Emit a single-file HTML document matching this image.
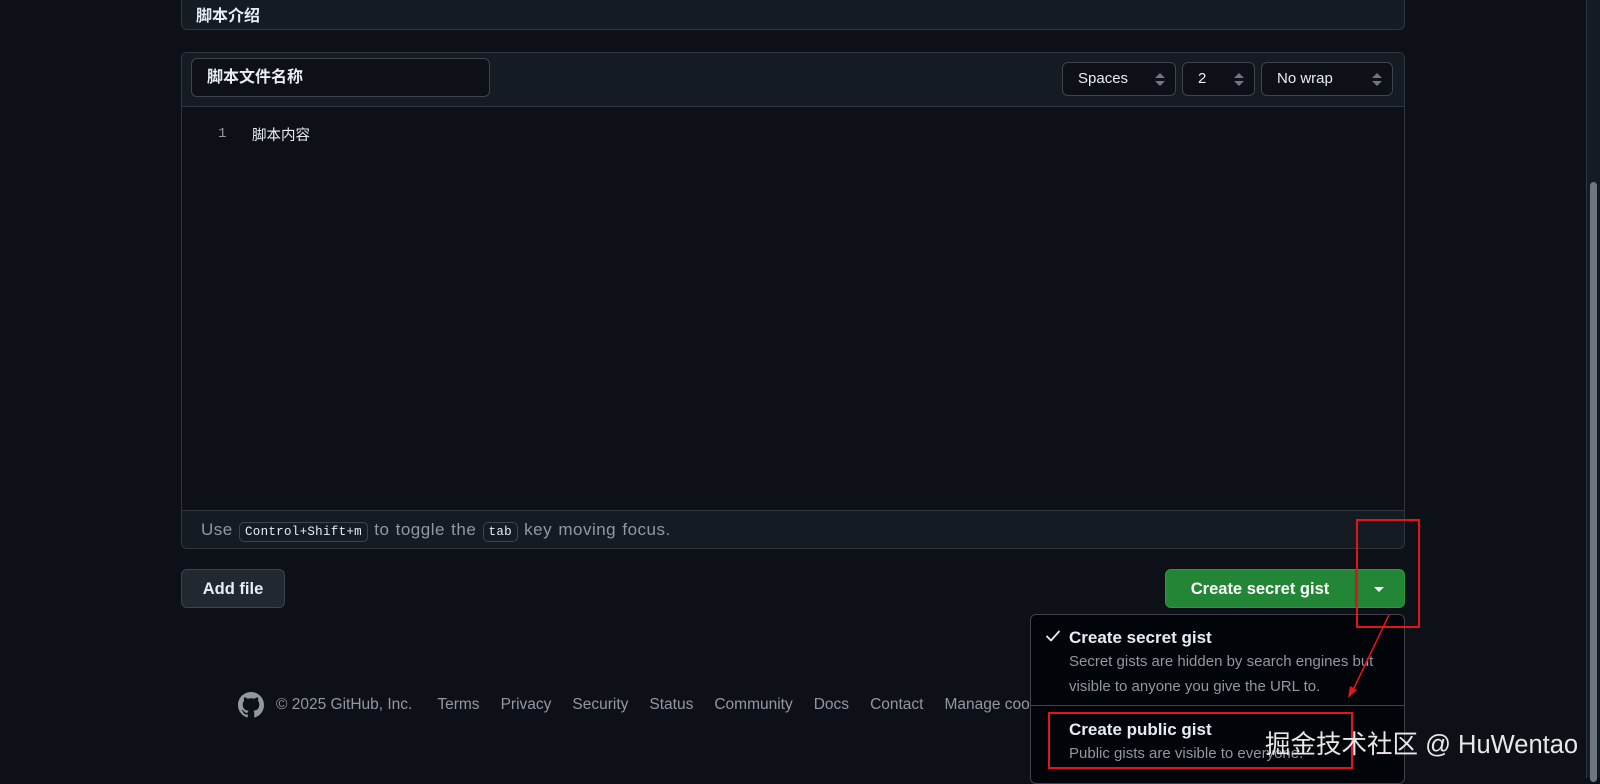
<!DOCTYPE html>
<html><head><meta charset="utf-8"><style>
*{box-sizing:border-box;margin:0;padding:0}
body{width:1600px;height:778px;background:#0d1117;overflow:hidden;position:relative;font-family:"Liberation Sans","Noto Sans CJK SC",sans-serif;color:#e6edf3;font-size:14px}
.abs{position:absolute}
.box{border:1px solid #30363d;border-radius:6px}
.sel{position:absolute;top:62px;height:34px;border:1px solid #3d444d;border-radius:6px;background:#0d1117;font-size:15px;line-height:32px;padding-left:15px}
.sel:after{content:"";position:absolute;right:10px;top:10px;width:0;height:0;border-left:5px solid transparent;border-right:5px solid transparent;border-bottom:5px solid #6e7681}
.sel:before{content:"";position:absolute;right:10px;top:18px;width:0;height:0;border-left:5px solid transparent;border-right:5px solid transparent;border-top:5px solid #6e7681}
kbd{font-family:"Liberation Mono",monospace;font-size:12.5px;border:1px solid #3d444d;border-radius:5px;padding:2px 5px;color:#e6edf3;background:#151b23;letter-spacing:0.3px}
.f a{color:#9198a1;margin-right:21px}
</style></head><body>
<div class="abs box" style="left:181px;top:-10px;width:1224px;height:40px;background:#151b23;border-top:none"></div>
<div class="abs" style="left:196px;top:2px;font-size:16px;font-weight:bold">脚本介绍</div>

<div class="abs box" style="left:181px;top:52px;width:1224px;height:497px"></div>
<div class="abs" style="left:182px;top:53px;width:1222px;height:54px;background:#151b23;border-bottom:1px solid #30363d;border-radius:6px 6px 0 0"></div>
<div class="abs" style="left:191px;top:58px;width:299px;height:39px;border:1px solid #3d444d;border-radius:6px;background:#0d1117;padding-left:15px;line-height:37px;font-size:16px;font-weight:bold">脚本文件名称</div>
<div class="sel" style="left:1062px;width:114px">Spaces</div>
<div class="sel" style="left:1182px;width:73px">2</div>
<div class="sel" style="left:1261px;width:132px">No wrap</div>
<div class="abs" style="left:218px;top:126px;color:#9198a1;font-family:'Liberation Mono',monospace;font-size:14px">1</div>
<div class="abs" style="left:252px;top:124px;font-size:14.5px">脚本内容</div>
<div class="abs" style="left:182px;top:510px;width:1222px;height:38px;background:#151b23;border-top:1px solid #30363d;border-radius:0 0 6px 6px;padding-left:19px;line-height:38px;color:#9198a1;font-size:17px;letter-spacing:0.5px;word-spacing:1px">Use <kbd>Control+Shift+m</kbd> to toggle the <kbd>tab</kbd> key moving focus.</div>

<div class="abs" style="left:181px;top:569px;width:104px;height:39px;background:#212830;border:1px solid #3d444d;border-radius:6px;font-weight:bold;font-size:16.5px;line-height:39px;text-align:center">Add file</div>
<div class="abs" style="left:1165px;top:569px;width:240px;height:39px;background:#238636;border:1px solid #2e9a40;border-radius:6px"></div>
<div class="abs" style="left:1355px;top:570px;width:1px;height:37px;background:#1c6b2c"></div>
<div class="abs" style="left:1165px;top:569px;width:190px;line-height:40px;text-align:center;font-weight:bold;font-size:16.5px;color:#fff">Create secret gist</div>
<div class="abs" style="left:1374px;top:587px;border-left:5px solid transparent;border-right:5px solid transparent;border-top:5px solid #fff"></div>

<div class="abs f" style="left:238px;top:695px;font-size:15.5px;color:#9198a1;white-space:nowrap;line-height:20px">
<svg style="position:absolute;left:0;top:-3px" width="26" height="26" viewBox="0 0 16 16"><path fill="#9198a1" d="M8 0C3.58 0 0 3.580 0 8c0 3.54 2.29 6.53 5.47 7.590.4.07.55-.17.55-.38 0-.19-.01-.82-.01-1.49-2.010.37-2.53-.49-2.69-.94-.09-.23-.48-.94-.82-1.13-.28-.15-.68-.52-.01-.53.63-.01 1.08.58 1.23.82.72 1.21 1.87.87 2.33.66.07-.52.28-.87.51-1.07-1.78-.2-3.64-.89-3.64-3.95 0-.87.31-1.59.82-2.15-.08-.2-.36-1.02.08-2.12 0 0 .67-.21 2.2.82.64-.18 1.32-.27 2-.27.68 0 1.36.09 2 .27 1.53-1.04 2.2-.82 2.2-.82.44 1.1.16 1.92.08 2.12.51.56.82 1.27.82 2.15 0 3.07-1.870 3.75-3.65 3.95.29.25.54.73.54 1.48 0 1.07-.01 1.93-.01 2.2 0 .21.15.46.55.38A8.013 8.013 0 0016 8c0-4.42-3.58-8-8-8z"/></svg>
<span style="margin-left:38px;margin-right:25px">© 2025 GitHub, Inc.</span><a>Terms</a><a>Privacy</a><a>Security</a><a>Status</a><a>Community</a><a>Docs</a><a>Contact</a><a>Manage cookies</a></div>

<div class="abs" style="left:1030px;top:614px;width:375px;height:170px;background:#010409;border:1px solid #3d444d;border-radius:6px"></div>
<div class="abs" style="left:1031px;top:705px;width:373px;height:1px;background:#3d444d"></div>
<svg class="abs" style="left:1045px;top:628px" width="16" height="16" viewBox="0 0 16 16"><path d="M2 8.5 L6 12.5 L14 3.5" fill="none" stroke="#e6edf3" stroke-width="1.8" stroke-linecap="round" stroke-linejoin="round"/></svg>
<div class="abs" style="left:1069px;top:628px;font-weight:bold;font-size:17px">Create secret gist</div>
<div class="abs" style="left:1069px;top:650px;color:#9198a1;font-size:15px;line-height:24.5px;width:335px">Secret gists are hidden by search engines but visible to anyone you give the URL to.</div>
<div class="abs" style="left:1069px;top:720px;font-weight:bold;font-size:17px">Create public gist</div>
<div class="abs" style="left:1069px;top:745px;color:#9198a1;font-size:15px">Public gists are visible to everyone.</div>

<div class="abs" style="left:1356px;top:519px;width:64px;height:109px;border:2px solid #e5131b"></div>
<div class="abs" style="left:1048px;top:712px;width:305px;height:57px;border:2px solid #e5131b"></div>
<svg class="abs" style="left:1340px;top:612px" width="60" height="90"><line x1="49" y1="3" x2="13" y2="78" stroke="#e5131b" stroke-width="1.5"/><path d="M8 86 L10 74 L17 78 Z" fill="#e5131b"/></svg>
<div class="abs" style="left:1265px;top:724px;font-size:25.5px;color:#e8e8e8;white-space:nowrap">掘金技术社区 @ HuWentao</div>

<div class="abs" style="left:1586px;top:0;width:14px;height:778px;background:#151b23;border-left:1px solid #30363d"></div>
<div class="abs" style="left:1590px;top:182px;width:7px;height:600px;background:#6e7681;border-radius:4px"></div>
</body></html>
